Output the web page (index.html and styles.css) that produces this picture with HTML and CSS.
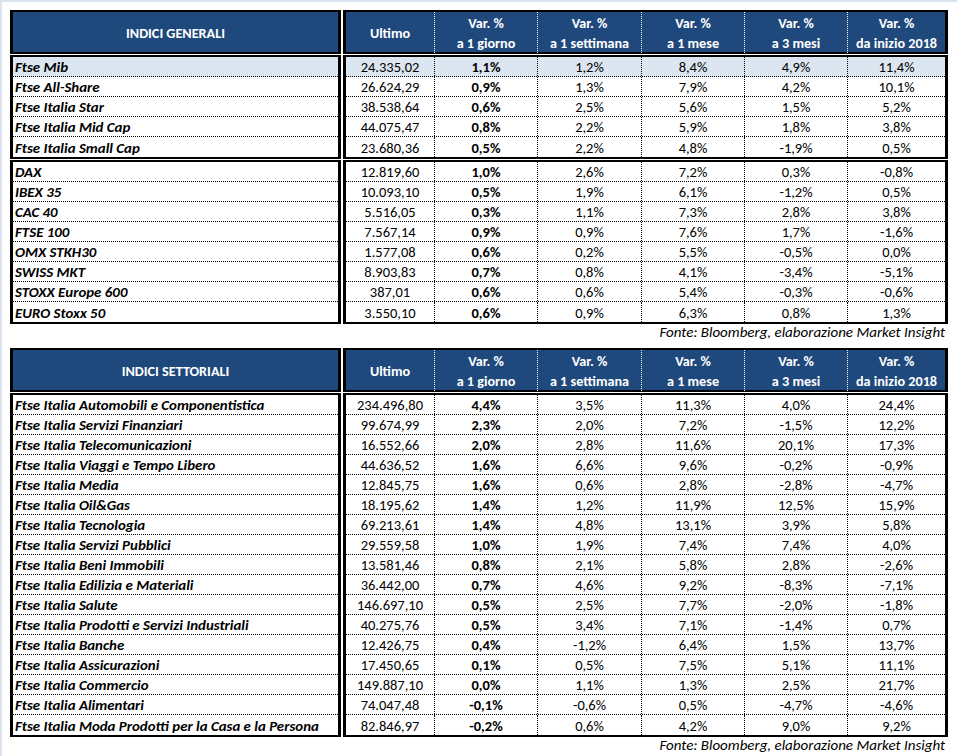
FILE: index.html
```html
<!DOCTYPE html>
<html lang="it">
<head>
<meta charset="utf-8">
<title>Indici</title>
<link rel="stylesheet" href="styles.css">
</head>
<body>
<div class="page">
  <section class="section">
    <div class="grid">
      <div class="box head label-head">INDICI GENERALI</div>
      <div class="box head data-head">
        <div class="hc">Ultimo</div>
        <div class="hc"><span>Var. %</span><span>a 1 giorno</span></div>
        <div class="hc"><span>Var. %</span><span>a 1 settimana</span></div>
        <div class="hc"><span>Var. %</span><span>a 1 mese</span></div>
        <div class="hc"><span>Var. %</span><span>a 3 mesi</span></div>
        <div class="hc"><span>Var. %</span><span>da inizio 2018</span></div>
      </div>
      <div class="box label">
        <div class="row hl">Ftse Mib</div>
        <div class="row">Ftse All-Share</div>
        <div class="row">Ftse Italia Star</div>
        <div class="row">Ftse Italia Mid Cap</div>
        <div class="row">Ftse Italia Small Cap</div>
      </div>
      <div class="box data">
        <div class="row hl"><span class="cell">24.335,02</span><span class="cell b">1,1%</span><span class="cell">1,2%</span><span class="cell">8,4%</span><span class="cell">4,9%</span><span class="cell">11,4%</span></div>
        <div class="row"><span class="cell">26.624,29</span><span class="cell b">0,9%</span><span class="cell">1,3%</span><span class="cell">7,9%</span><span class="cell">4,2%</span><span class="cell">10,1%</span></div>
        <div class="row"><span class="cell">38.538,64</span><span class="cell b">0,6%</span><span class="cell">2,5%</span><span class="cell">5,6%</span><span class="cell">1,5%</span><span class="cell">5,2%</span></div>
        <div class="row"><span class="cell">44.075,47</span><span class="cell b">0,8%</span><span class="cell">2,2%</span><span class="cell">5,9%</span><span class="cell">1,8%</span><span class="cell">3,8%</span></div>
        <div class="row"><span class="cell">23.680,36</span><span class="cell b">0,5%</span><span class="cell">2,2%</span><span class="cell">4,8%</span><span class="cell">-1,9%</span><span class="cell">0,5%</span></div>
      </div>
      <div class="box label">
        <div class="row">DAX</div>
        <div class="row">IBEX 35</div>
        <div class="row">CAC 40</div>
        <div class="row">FTSE 100</div>
        <div class="row">OMX STKH30</div>
        <div class="row">SWISS MKT</div>
        <div class="row">STOXX Europe 600</div>
        <div class="row">EURO Stoxx 50</div>
      </div>
      <div class="box data">
        <div class="row"><span class="cell">12.819,60</span><span class="cell b">1,0%</span><span class="cell">2,6%</span><span class="cell">7,2%</span><span class="cell">0,3%</span><span class="cell">-0,8%</span></div>
        <div class="row"><span class="cell">10.093,10</span><span class="cell b">0,5%</span><span class="cell">1,9%</span><span class="cell">6,1%</span><span class="cell">-1,2%</span><span class="cell">0,5%</span></div>
        <div class="row"><span class="cell">5.516,05</span><span class="cell b">0,3%</span><span class="cell">1,1%</span><span class="cell">7,3%</span><span class="cell">2,8%</span><span class="cell">3,8%</span></div>
        <div class="row"><span class="cell">7.567,14</span><span class="cell b">0,9%</span><span class="cell">0,9%</span><span class="cell">7,6%</span><span class="cell">1,7%</span><span class="cell">-1,6%</span></div>
        <div class="row"><span class="cell">1.577,08</span><span class="cell b">0,6%</span><span class="cell">0,2%</span><span class="cell">5,5%</span><span class="cell">-0,5%</span><span class="cell">0,0%</span></div>
        <div class="row"><span class="cell">8.903,83</span><span class="cell b">0,7%</span><span class="cell">0,8%</span><span class="cell">4,1%</span><span class="cell">-3,4%</span><span class="cell">-5,1%</span></div>
        <div class="row"><span class="cell">387,01</span><span class="cell b">0,6%</span><span class="cell">0,6%</span><span class="cell">5,4%</span><span class="cell">-0,3%</span><span class="cell">-0,6%</span></div>
        <div class="row"><span class="cell">3.550,10</span><span class="cell b">0,6%</span><span class="cell">0,9%</span><span class="cell">6,3%</span><span class="cell">0,8%</span><span class="cell">1,3%</span></div>
      </div>
    </div>
    <p class="source">Fonte: Bloomberg, elaborazione Market Insight</p>
  </section>

  <section class="section second">
    <div class="grid">
      <div class="box head label-head">INDICI SETTORIALI</div>
      <div class="box head data-head">
        <div class="hc">Ultimo</div>
        <div class="hc"><span>Var. %</span><span>a 1 giorno</span></div>
        <div class="hc"><span>Var. %</span><span>a 1 settimana</span></div>
        <div class="hc"><span>Var. %</span><span>a 1 mese</span></div>
        <div class="hc"><span>Var. %</span><span>a 3 mesi</span></div>
        <div class="hc"><span>Var. %</span><span>da inizio 2018</span></div>
      </div>
      <div class="box label">
        <div class="row">Ftse Italia Automobili e Componentistica</div>
        <div class="row">Ftse Italia Servizi Finanziari</div>
        <div class="row">Ftse Italia Telecomunicazioni</div>
        <div class="row">Ftse Italia Viaggi e Tempo Libero</div>
        <div class="row">Ftse Italia Media</div>
        <div class="row">Ftse Italia Oil&amp;Gas</div>
        <div class="row">Ftse Italia Tecnologia</div>
        <div class="row">Ftse Italia Servizi Pubblici</div>
        <div class="row">Ftse Italia Beni Immobili</div>
        <div class="row">Ftse Italia Edilizia e Materiali</div>
        <div class="row">Ftse Italia Salute</div>
        <div class="row">Ftse Italia Prodotti e Servizi Industriali</div>
        <div class="row">Ftse Italia Banche</div>
        <div class="row">Ftse Italia Assicurazioni</div>
        <div class="row">Ftse Italia Commercio</div>
        <div class="row">Ftse Italia Alimentari</div>
        <div class="row">Ftse Italia Moda Prodotti per la Casa e la Persona</div>
      </div>
      <div class="box data">
        <div class="row"><span class="cell">234.496,80</span><span class="cell b">4,4%</span><span class="cell">3,5%</span><span class="cell">11,3%</span><span class="cell">4,0%</span><span class="cell">24,4%</span></div>
        <div class="row"><span class="cell">99.674,99</span><span class="cell b">2,3%</span><span class="cell">2,0%</span><span class="cell">7,2%</span><span class="cell">-1,5%</span><span class="cell">12,2%</span></div>
        <div class="row"><span class="cell">16.552,66</span><span class="cell b">2,0%</span><span class="cell">2,8%</span><span class="cell">11,6%</span><span class="cell">20,1%</span><span class="cell">17,3%</span></div>
        <div class="row"><span class="cell">44.636,52</span><span class="cell b">1,6%</span><span class="cell">6,6%</span><span class="cell">9,6%</span><span class="cell">-0,2%</span><span class="cell">-0,9%</span></div>
        <div class="row"><span class="cell">12.845,75</span><span class="cell b">1,6%</span><span class="cell">0,6%</span><span class="cell">2,8%</span><span class="cell">-2,8%</span><span class="cell">-4,7%</span></div>
        <div class="row"><span class="cell">18.195,62</span><span class="cell b">1,4%</span><span class="cell">1,2%</span><span class="cell">11,9%</span><span class="cell">12,5%</span><span class="cell">15,9%</span></div>
        <div class="row"><span class="cell">69.213,61</span><span class="cell b">1,4%</span><span class="cell">4,8%</span><span class="cell">13,1%</span><span class="cell">3,9%</span><span class="cell">5,8%</span></div>
        <div class="row"><span class="cell">29.559,58</span><span class="cell b">1,0%</span><span class="cell">1,9%</span><span class="cell">7,4%</span><span class="cell">7,4%</span><span class="cell">4,0%</span></div>
        <div class="row"><span class="cell">13.581,46</span><span class="cell b">0,8%</span><span class="cell">2,1%</span><span class="cell">5,8%</span><span class="cell">2,8%</span><span class="cell">-2,6%</span></div>
        <div class="row"><span class="cell">36.442,00</span><span class="cell b">0,7%</span><span class="cell">4,6%</span><span class="cell">9,2%</span><span class="cell">-8,3%</span><span class="cell">-7,1%</span></div>
        <div class="row"><span class="cell">146.697,10</span><span class="cell b">0,5%</span><span class="cell">2,5%</span><span class="cell">7,7%</span><span class="cell">-2,0%</span><span class="cell">-1,8%</span></div>
        <div class="row"><span class="cell">40.275,76</span><span class="cell b">0,5%</span><span class="cell">3,4%</span><span class="cell">7,1%</span><span class="cell">-1,4%</span><span class="cell">0,7%</span></div>
        <div class="row"><span class="cell">12.426,75</span><span class="cell b">0,4%</span><span class="cell">-1,2%</span><span class="cell">6,4%</span><span class="cell">1,5%</span><span class="cell">13,7%</span></div>
        <div class="row"><span class="cell">17.450,65</span><span class="cell b">0,1%</span><span class="cell">0,5%</span><span class="cell">7,5%</span><span class="cell">5,1%</span><span class="cell">11,1%</span></div>
        <div class="row"><span class="cell">149.887,10</span><span class="cell b">0,0%</span><span class="cell">1,1%</span><span class="cell">1,3%</span><span class="cell">2,5%</span><span class="cell">21,7%</span></div>
        <div class="row"><span class="cell">74.047,48</span><span class="cell b">-0,1%</span><span class="cell">-0,6%</span><span class="cell">0,5%</span><span class="cell">-4,7%</span><span class="cell">-4,6%</span></div>
        <div class="row"><span class="cell">82.846,97</span><span class="cell b">-0,2%</span><span class="cell">0,6%</span><span class="cell">4,2%</span><span class="cell">9,0%</span><span class="cell">9,2%</span></div>
      </div>
    </div>
    <p class="source">Fonte: Bloomberg, elaborazione Market Insight</p>
  </section>
</div>
</body>
</html>
```

FILE: styles.css
```css
* {
  box-sizing: border-box;
}

html {
  background: #ffffff;
}

body {
  margin: 0;
  min-height: 756px;
  background: #ffffff;
  border-top: 2px solid #dbe3ee;
  border-left: 2px solid #dbe3ee;
  font-family: Carlito, Lato, "Liberation Sans", sans-serif;
  font-size: 14.5px;
  color: #000000;
}

.page {
  padding: 8px 0 0 8px;
}

.section.second {
  margin-top: 8px;
}

.grid {
  display: grid;
  grid-template-columns: 331px 605px;
  column-gap: 2px;
  row-gap: 1px;
}

.box {
  border: 3px solid #000000;
  border-top-width: 2px;
  border-bottom-width: 2px;
}

.head {
  height: 44px;
  background: #1f497d;
  color: #ffffff;
  font-weight: bold;
  font-size: 14.2px;
}

.label-head {
  display: flex;
  align-items: center;
  justify-content: center;
  padding-top: 2px;
}

.data-head,
.data .row {
  display: grid;
  grid-template-columns: 88px 103px 104px 103px 103px 98px;
}

.hc {
  display: flex;
  flex-direction: column;
  align-items: center;
  justify-content: center;
  line-height: 20px;
  padding-top: 1px;
}

.hc + .hc {
  border-left: 1px dotted #ffffff;
}

.row {
  height: 20px;
  border-bottom: 1px dotted #000000;
}

.row:last-child {
  border-bottom: 0;
}

.label .row {
  display: flex;
  align-items: center;
  padding-left: 2px;
  padding-top: 1px;
  font-size: 14.9px;
  font-weight: bold;
  font-style: italic;
  white-space: nowrap;
}

.cell {
  display: flex;
  align-items: center;
  justify-content: center;
  padding-top: 1px;
}

.cell + .cell {
  border-left: 1px dotted #000000;
}

.cell.b {
  font-weight: bold;
}

.hl {
  background: #dce6f1;
}

.source {
  margin: 0;
  width: 938px;
  height: 16px;
  padding-right: 3px;
  text-align: right;
  font-style: italic;
  font-size: 15px;
  line-height: 16px;
}
```
